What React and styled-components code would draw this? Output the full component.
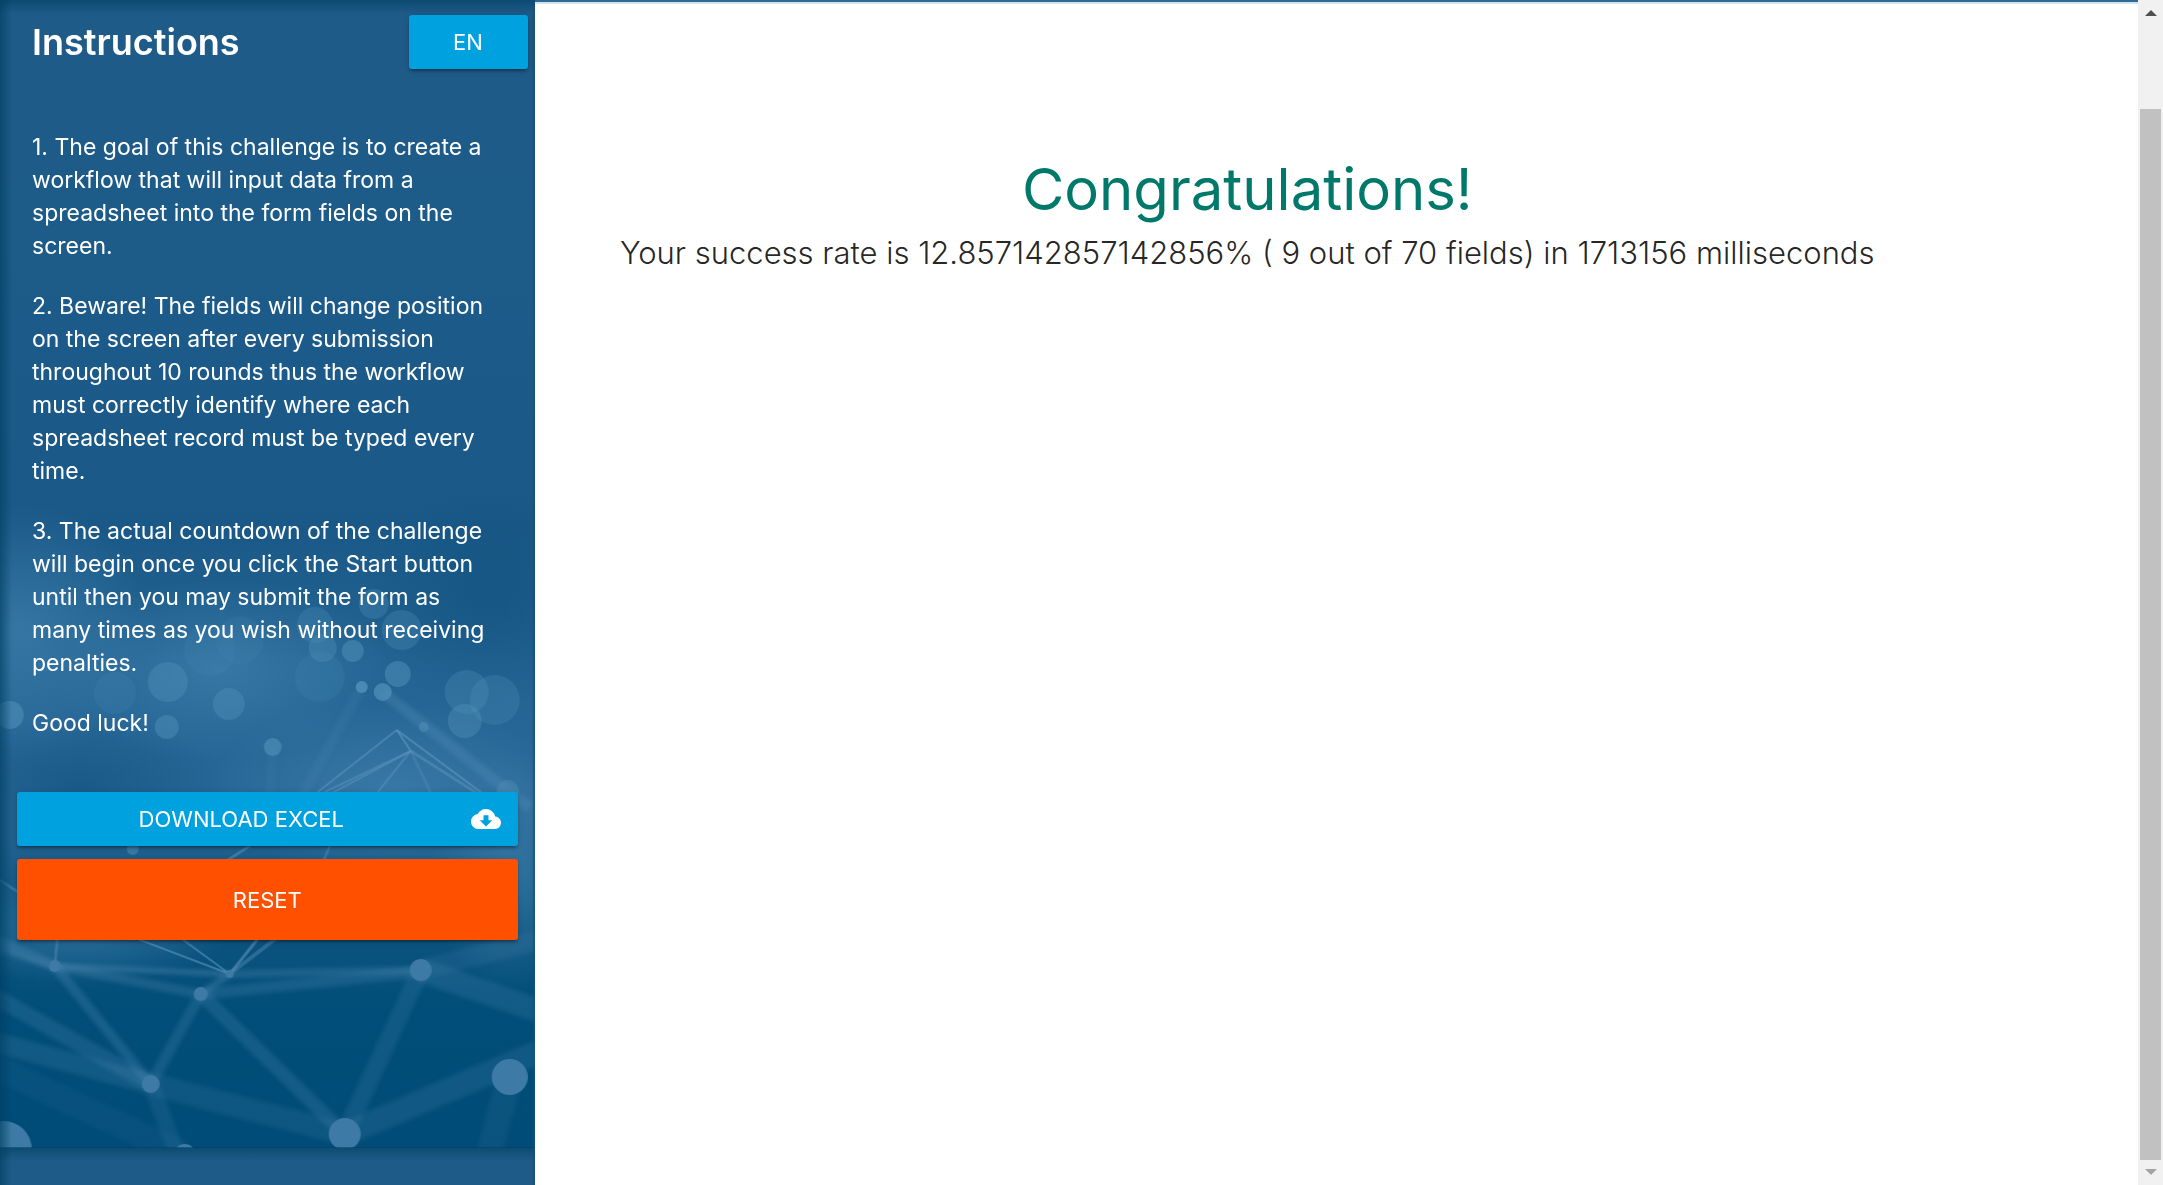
import React from "react";
import styled, { createGlobalStyle } from "styled-components";
import { MdCloudDownload } from "react-icons/md";

const GlobalStyle = createGlobalStyle`
  *, *::before, *::after { box-sizing: border-box; }
  body {
    margin: 0;
    background: #fff;
    color: rgba(0, 0, 0, 0.87);
    font-family: Inter, "Liberation Sans", sans-serif;
  }
`;

const Page = styled.div`
  display: flex;
  min-height: 100vh;
`;

const Content = styled.div`
  flex: 1;
  display: flex;
`;

const Sidebar = styled.aside`
  position: relative;
  flex: 0 0 25%;
  background: #1f5a87;
  color: #fff;
`;

const Backdrop = styled.svg`
  position: absolute;
  inset: 0;
  width: 100%;
  height: 100%;
`;

const SidebarBody = styled.div`
  position: relative;
  display: flex;
  flex-direction: column;
  padding-top: 15px;
`;

const SidebarHeader = styled.header`
  display: flex;
  justify-content: space-between;
  align-items: center;
  padding: 0 7px 0 32px;
`;

const Heading = styled.h1`
  margin: 0;
  font-size: 36px;
  font-weight: 600;
  line-height: 54px;
`;

const Button = styled.button`
  display: flex;
  align-items: center;
  justify-content: center;
  width: ${(p) => p.$width || "auto"};
  height: ${(p) => (p.$tall ? "81px" : "54px")};
  padding: 0;
  border: 0;
  border-radius: 3px;
  background: ${(p) => (p.$accent ? "#ff5000" : "#00a1df")};
  color: #fff;
  font-family: inherit;
  font-size: 22px;
  text-transform: uppercase;
  cursor: pointer;
  box-shadow: 0 3px 3px rgba(0, 0, 0, 0.16), 0 4px 2px -3px rgba(0, 0, 0, 0.3),
    0 1px 7px rgba(0, 0, 0, 0.14);
`;

const DownloadLink = styled(Button).attrs({ as: "a" })`
  gap: 5px;
  padding-right: 17px;
  text-decoration: none;
`;

const ButtonLabel = styled.span`
  flex: 1;
  text-align: center;
`;

const Steps = styled.div`
  display: flex;
  flex-direction: column;
  gap: 27px;
  margin-top: 62px;
  padding: 0 40px 0 32px;
`;

const Step = styled.p`
  margin: 0;
  font-size: 23px;
  line-height: 33px;
`;

const Actions = styled.div`
  display: flex;
  flex-direction: column;
  gap: 13px;
  margin-top: 52px;
  padding: 0 17px;
`;

const Main = styled.main`
  flex: 1;
  border-top: 2px solid #2d6b92;
  box-shadow: inset 0 2px 0 #d3e3ee;
`;

const Result = styled.section`
  display: flex;
  flex-direction: column;
  gap: 8px;
  width: 88.9%;
  padding-top: 155px;
  text-align: center;
`;

const ResultTitle = styled.h2`
  margin: 0;
  color: #00796b;
  font-size: 58px;
  font-weight: 400;
  line-height: 64px;
`;

const ResultText = styled.p`
  margin: 0;
  font-size: 31px;
  font-weight: 300;
  line-height: 48px;
`;

const Scrollbar = styled.div`
  display: flex;
  flex-direction: column;
  flex: 0 0 25px;
  background: #f1f1f1;
`;

const ScrollArrow = styled.svg`
  display: block;
  width: 25px;
  height: 25px;
  fill: ${(p) => p.$color};
`;

const Track = styled.div`
  flex: 1;
  display: flex;
  flex-direction: column;
  padding: 0 2px;

  &::before {
    content: "";
    flex: 84;
  }
`;

const Thumb = styled.div`
  flex: 1051;
  background: #c1c1c1;
`;

const STEPS = [
  "1. The goal of this challenge is to create a workflow that will input data from a spreadsheet into the form fields on the screen.",
  "2. Beware! The fields will change position on the screen after every submission throughout 10 rounds thus the workflow must correctly identify where each spreadsheet record must be typed every time.",
  "3. The actual countdown of the challenge will begin once you click the Start button until then you may submit the form as many times as you wish without receiving penalties.",
  "Good luck!",
];

// [x, y, radius, opacity]
const BOKEH = [
  [10, 715, 14, 0.55], [168, 682, 20, 0.4], [229, 704, 16, 0.4], [167, 727, 12, 0.45],
  [115, 693, 21, 0.15], [374, 604, 15, 0.3], [402, 630, 20, 0.3], [315, 625, 18, 0.25],
  [323, 648, 14, 0.35], [353, 651, 11, 0.5], [398, 674, 13, 0.5], [362, 687, 6, 0.8],
  [383, 692, 9, 0.7], [467, 692, 22, 0.3], [495, 700, 25, 0.25], [465, 721, 17, 0.4],
  [273, 747, 9, 0.6], [424, 727, 5, 0.5], [320, 677, 25, 0.15], [508, 791, 11, 0.4],
  [210, 650, 26, 0.12], [240, 640, 24, 0.12], [133, 849, 6, 0.5],
];

const NODES = [
  [55, 966, 6], [230, 974, 4], [201, 994, 7], [421, 970, 11], [151, 1084, 9],
  [510, 1077, 18], [345, 1134, 16], [4, 1149, 28], [185, 1155, 11],
];

// [x1, y1, x2, y2, width, opacity]
const FINE_LINKS = [
  [397, 730, 318, 792, 2, 0.6], [397, 730, 485, 795, 2, 0.7], [397, 730, 411, 751, 2, 0.7],
  [411, 751, 325, 792, 2, 0.5], [411, 751, 310, 805, 2, 0.5], [411, 751, 378, 792, 2, 0.5],
  [411, 751, 432, 795, 3, 0.3], [411, 751, 480, 795, 3, 0.5],
  [250, 846, 228, 860, 3, 0.5], [330, 846, 324, 860, 3, 0.4],
  [0, 880, 18, 892, 3, 0.4], [58, 935, 55, 966, 3, 0.4],
  [230, 974, 130, 936, 2, 0.6], [230, 974, 178, 936, 2, 0.6],
  [230, 974, 262, 934, 3, 0.6], [230, 974, 282, 934, 4, 0.4],
];

const SOFT_LINKS = [
  [383, 692, 530, 808, 11, 0.28], [362, 687, 300, 800, 10, 0.12], [273, 747, 270, 800, 10, 0.08],
  [-10, 938, 55, 966, 11, 0.3], [-10, 948, 55, 966, 6, 0.2],
  [55, 966, 230, 974, 6, 0.34], [55, 966, 201, 994, 9, 0.24],
  [55, 966, 151, 1084, 10, 0.26], [230, 974, 421, 970, 8, 0.26],
  [230, 974, 201, 994, 7, 0.3], [201, 994, 421, 972, 11, 0.22], [201, 994, 151, 1084, 11, 0.22],
  [201, 994, 345, 1134, 14, 0.22], [421, 970, 345, 1134, 18, 0.17], [345, 1134, 560, 1043, 24, 0.18],
  [345, 1134, 151, 1084, 22, 0.15], [-20, 988, 151, 1084, 16, 0.22], [-20, 1038, 151, 1084, 20, 0.2],
  [151, 1084, 180, 1160, 16, 0.15], [-20, 1060, 185, 1155, 26, 0.07], [421, 970, 560, 1018, 24, 0.2],
  [421, 970, 560, 935, 20, 0.13], [510, 1077, 485, 1170, 26, 0.1],
];

const toLine = ([x1, y1, x2, y2, width, opacity], i) => (
  <line key={i} x1={x1} y1={y1} x2={x2} y2={y2} stroke="#5c93bd" strokeWidth={width} opacity={opacity} />
);

function NetworkBackdrop() {
  return (
    <Backdrop viewBox="0 0 535 1185" preserveAspectRatio="xMidYMin slice" aria-hidden="true">
      <defs>
        <linearGradient id="sky" x1="0" y1="0" x2="0" y2="1">
          <stop offset="0" stopColor="#1f5b88" />
          <stop offset="0.3" stopColor="#1c5b89" />
          <stop offset="0.46" stopColor="#1a5987" />
          <stop offset="0.58" stopColor="#236494" />
          <stop offset="0.7" stopColor="#286797" />
          <stop offset="0.8" stopColor="#105581" />
          <stop offset="0.88" stopColor="#004e79" />
          <stop offset="1" stopColor="#004c78" />
        </linearGradient>
        <linearGradient id="leftEdge">
          <stop offset="0" stopColor="#003f62" stopOpacity="0.65" />
          <stop offset="0.4" stopColor="#003f62" stopOpacity="0.4" />
          <stop offset="1" stopColor="#003f62" stopOpacity="0" />
        </linearGradient>
        <linearGradient id="topEdge" x1="0" y1="0" x2="0" y2="1">
          <stop offset="0" stopColor="#003f62" stopOpacity="0.6" />
          <stop offset="1" stopColor="#003f62" stopOpacity="0" />
        </linearGradient>
        <radialGradient id="haze">
          <stop offset="0" stopColor="#4a8ab6" stopOpacity="0.5" />
          <stop offset="1" stopColor="#4a8ab6" stopOpacity="0" />
        </radialGradient>
        <radialGradient id="shade">
          <stop offset="0" stopColor="#0e4f7c" stopOpacity="0.55" />
          <stop offset="1" stopColor="#0e4f7c" stopOpacity="0" />
        </radialGradient>
        <filter id="soften" filterUnits="userSpaceOnUse" x="-30" y="600" width="600" height="600">
          <feGaussianBlur stdDeviation="2" />
        </filter>
        <clipPath id="tile">
          <rect width="535" height="1148" />
        </clipPath>
      </defs>
      <g clipPath="url(#tile)">
        <rect width="535" height="1148" fill="url(#sky)" />
        <ellipse cx="20" cy="630" rx="130" ry="130" fill="url(#haze)" />
        <ellipse cx="220" cy="670" rx="170" ry="90" fill="url(#haze)" />
        <ellipse cx="390" cy="790" rx="180" ry="90" fill="url(#haze)" />
        <ellipse cx="510" cy="870" rx="80" ry="120" fill="url(#haze)" />
        <ellipse cx="80" cy="930" rx="150" ry="55" fill="url(#haze)" />
        <ellipse cx="80" cy="785" rx="150" ry="65" fill="url(#shade)" />
        <ellipse cx="490" cy="600" rx="130" ry="110" fill="url(#shade)" />
        <g filter="url(#soften)">{SOFT_LINKS.map(toLine)}</g>
        {FINE_LINKS.map(toLine)}
        {BOKEH.map(([cx, cy, r, opacity], i) => (
          <circle key={i} cx={cx} cy={cy} r={r} fill="#5292ba" opacity={opacity} />
        ))}
        {NODES.map(([cx, cy, r], i) => (
          <circle key={i} cx={cx} cy={cy} r={r} fill="#3d7aa5" />
        ))}
      </g>
      <rect y="1148" width="535" height="37" fill="#1f5b88" />
      <rect y="1147" width="535" height="14" fill="url(#topEdge)" />
      <rect width="535" height="14" fill="url(#topEdge)" />
      <rect width="12" height="1185" fill="url(#leftEdge)" />
      <rect x="533" width="2" height="1185" fill="#174e77" opacity="0.6" />
    </Backdrop>
  );
}

export default function App() {
  return (
    <Page>
      <GlobalStyle />
      <Content>
        <Sidebar>
          <NetworkBackdrop />
          <SidebarBody>
            <SidebarHeader>
              <Heading>Instructions</Heading>
              <Button type="button" $width="119px">EN</Button>
            </SidebarHeader>
            <Steps>
              {STEPS.map((text) => (
                <Step key={text}>{text}</Step>
              ))}
            </Steps>
            <Actions>
              <DownloadLink href="#download">
                <ButtonLabel>Download Excel</ButtonLabel>
                <MdCloudDownload size={30} aria-hidden="true" />
              </DownloadLink>
              <Button type="button" $tall $accent>Reset</Button>
            </Actions>
          </SidebarBody>
        </Sidebar>
        <Main>
          <Result>
            <ResultTitle>Congratulations!</ResultTitle>
            <ResultText>
              Your success rate is 12.857142857142856% ( 9 out of 70 fields) in 1713156 milliseconds
            </ResultText>
          </Result>
        </Main>
      </Content>
      <Scrollbar aria-hidden="true">
        <ScrollArrow viewBox="0 0 25 25" $color="#505050">
          <path d="M7 16h12l-6-6z" />
        </ScrollArrow>
        <Track>
          <Thumb />
        </Track>
        <ScrollArrow viewBox="0 0 25 25" $color="#a3a3a3">
          <path d="M7 9h12l-6 6z" />
        </ScrollArrow>
      </Scrollbar>
    </Page>
  );
}
